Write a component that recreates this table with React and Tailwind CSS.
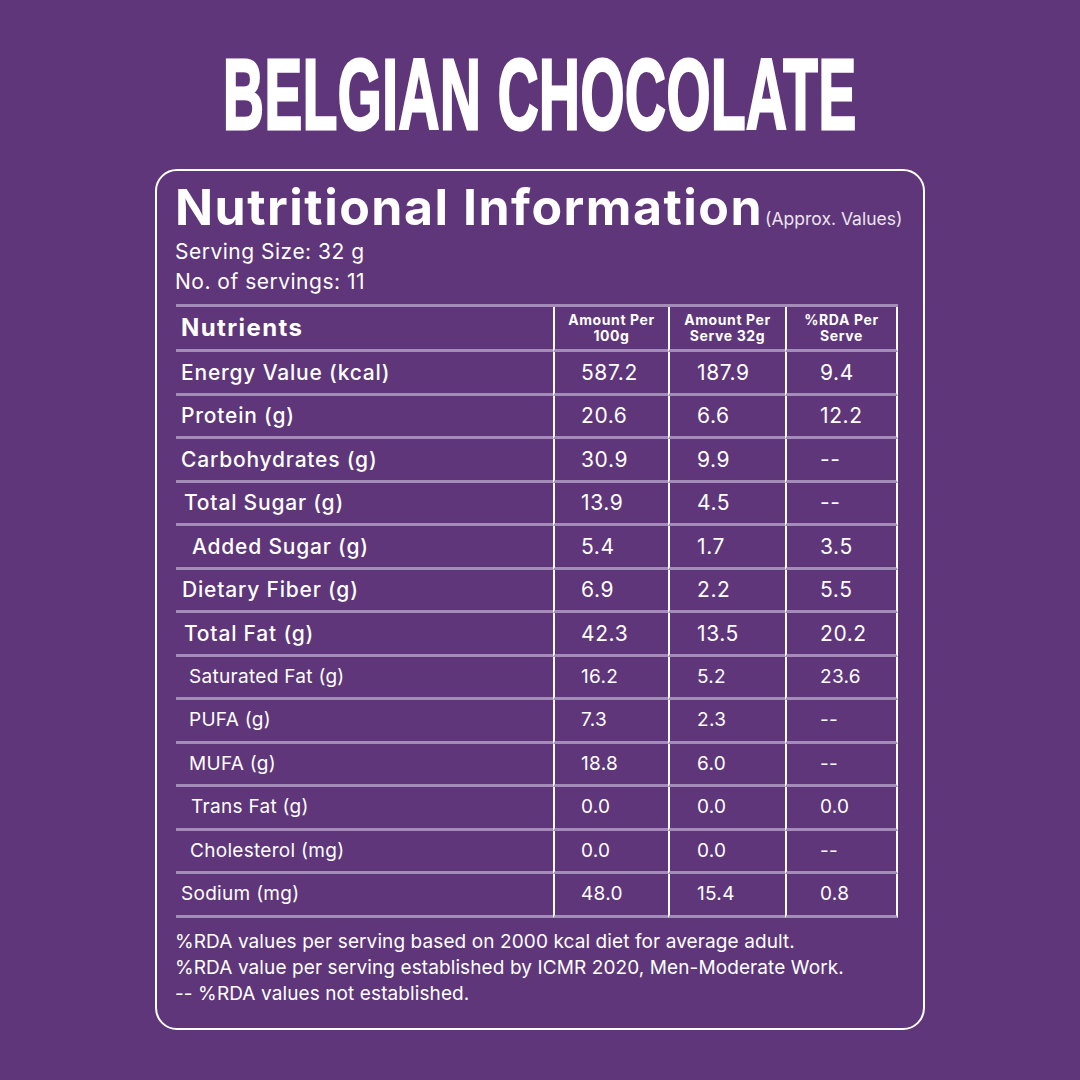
const rows = [
  { label: 'Energy Value (kcal)', v: ['587.2', '187.9', '9.4'], bold: true, indent: 'pl-[5px]' },
  { label: 'Protein (g)', v: ['20.6', '6.6', '12.2'], bold: true, indent: 'pl-[5px]' },
  { label: 'Carbohydrates (g)', v: ['30.9', '9.9', '--'], bold: true, indent: 'pl-[5px]' },
  { label: 'Total Sugar (g)', v: ['13.9', '4.5', '--'], bold: true, indent: 'pl-[8px]' },
  { label: 'Added Sugar (g)', v: ['5.4', '1.7', '3.5'], bold: true, indent: 'pl-[16px]' },
  { label: 'Dietary Fiber (g)', v: ['6.9', '2.2', '5.5'], bold: true, indent: 'pl-[6px]' },
  { label: 'Total Fat (g)', v: ['42.3', '13.5', '20.2'], bold: true, indent: 'pl-[8px]' },
  { label: 'Saturated Fat (g)', v: ['16.2', '5.2', '23.6'], bold: false, indent: 'pl-[13px]' },
  { label: 'PUFA (g)', v: ['7.3', '2.3', '--'], bold: false, indent: 'pl-[13px]' },
  { label: 'MUFA (g)', v: ['18.8', '6.0', '--'], bold: false, indent: 'pl-[13px]' },
  { label: 'Trans Fat (g)', v: ['0.0', '0.0', '0.0'], bold: false, indent: 'pl-[15px]' },
  { label: 'Cholesterol (mg)', v: ['0.0', '0.0', '--'], bold: false, indent: 'pl-[14px]' },
  { label: 'Sodium (mg)', v: ['48.0', '15.4', '0.8'], bold: false, indent: 'pl-[5px]' },
];

const colPad = ['pl-[26px]', 'pl-[27px]', 'pl-[33px]'];

const App = () => {
  return (
    <div className="w-[1080px] h-[1080px] bg-[#5e3679] flex flex-col items-center text-white font-['Inter',sans-serif]">
      {/* Title */}
      <div className="mt-[44px] h-[99px] flex justify-center">
        <h1 className="inline-block font-['Liberation_Sans',Arial,sans-serif] font-bold text-[101px] leading-none tracking-[1px] whitespace-nowrap scale-x-[0.56] [-webkit-text-stroke:3px_white]">
          BELGIAN CHOCOLATE
        </h1>
      </div>

      {/* Card */}
      <div className="mt-[26px] w-[770px] h-[861px] border-[2.5px] border-white rounded-[22px] pl-[18px] pr-[25px] pt-[11px]">
        <div className="flex items-end w-max whitespace-nowrap">
          <h2 className="shrink-0 text-[50px] font-bold leading-none tracking-[1.5px]">Nutritional Information</h2>
          <span className="shrink-0 text-[17.5px] text-[#ece4f1] leading-none mb-[5px] ml-[2px]">(Approx. Values)</span>
        </div>
        <div className="mt-[5px] text-[21px] leading-[30px] tracking-[0.5px]">
          <p>Serving Size: 32 g</p>
          <p>No. of servings: 11</p>
        </div>

        {/* Table */}
        <div className="mt-[7px] ml-[1px] w-[722px] border-t-[3px] border-[#a48cb8]">
          <div className="grid grid-cols-[377px_115px_117px_113px] h-[45px]">
            <div className="flex items-center pl-[5px] text-[24px] font-bold tracking-[1.4px] border-b-[3px] border-[#a48cb8]">Nutrients</div>
            <div className="flex items-center justify-center text-center text-[14px] font-bold leading-[16px] tracking-[0.6px] border-l-2 border-l-white border-b-[3px] border-b-[#a48cb8]">Amount Per<br />100g</div>
            <div className="flex items-center justify-center text-center text-[14px] font-bold leading-[16px] tracking-[0.6px] border-l-2 border-l-white border-b-[3px] border-b-[#a48cb8]">Amount Per<br />Serve 32g</div>
            <div className="flex items-center justify-center text-center text-[14px] font-bold leading-[16px] tracking-[0.6px] border-x-2 border-x-white border-b-[3px] border-b-[#a48cb8]">%RDA Per<br />Serve</div>
          </div>
          {rows.map((r) => (
            <div key={r.label} className="grid grid-cols-[377px_115px_117px_113px] h-[43.5px]">
              <div className={`flex items-center ${r.indent} ${r.bold ? 'text-[21px] font-medium tracking-[0.8px]' : 'text-[19px] tracking-[0.3px]'} border-b-[3px] border-[#a48cb8]`}>
                {r.label}
              </div>
              {r.v.map((val, i) => (
                <div
                  key={i}
                  className={`flex items-center ${colPad[i]} ${r.bold ? 'text-[21px] tracking-[0.6px]' : 'text-[19px] tracking-[0.3px]'} ${i === 2 ? 'border-x-2 border-x-white' : 'border-l-2 border-l-white'} border-b-[3px] border-b-[#a48cb8]`}
                >
                  {val}
                </div>
              ))}
            </div>
          ))}
        </div>

        {/* Footnotes */}
        <div className="mt-[11px] text-[19px] leading-[26px] tracking-[0.1px]">
          <p>%RDA values per serving based on 2000 kcal diet for average adult.</p>
          <p>%RDA value per serving established by ICMR 2020, Men-Moderate Work.</p>
          <p>-- %RDA values not established.</p>
        </div>
      </div>
    </div>
  );
};

export default App;
